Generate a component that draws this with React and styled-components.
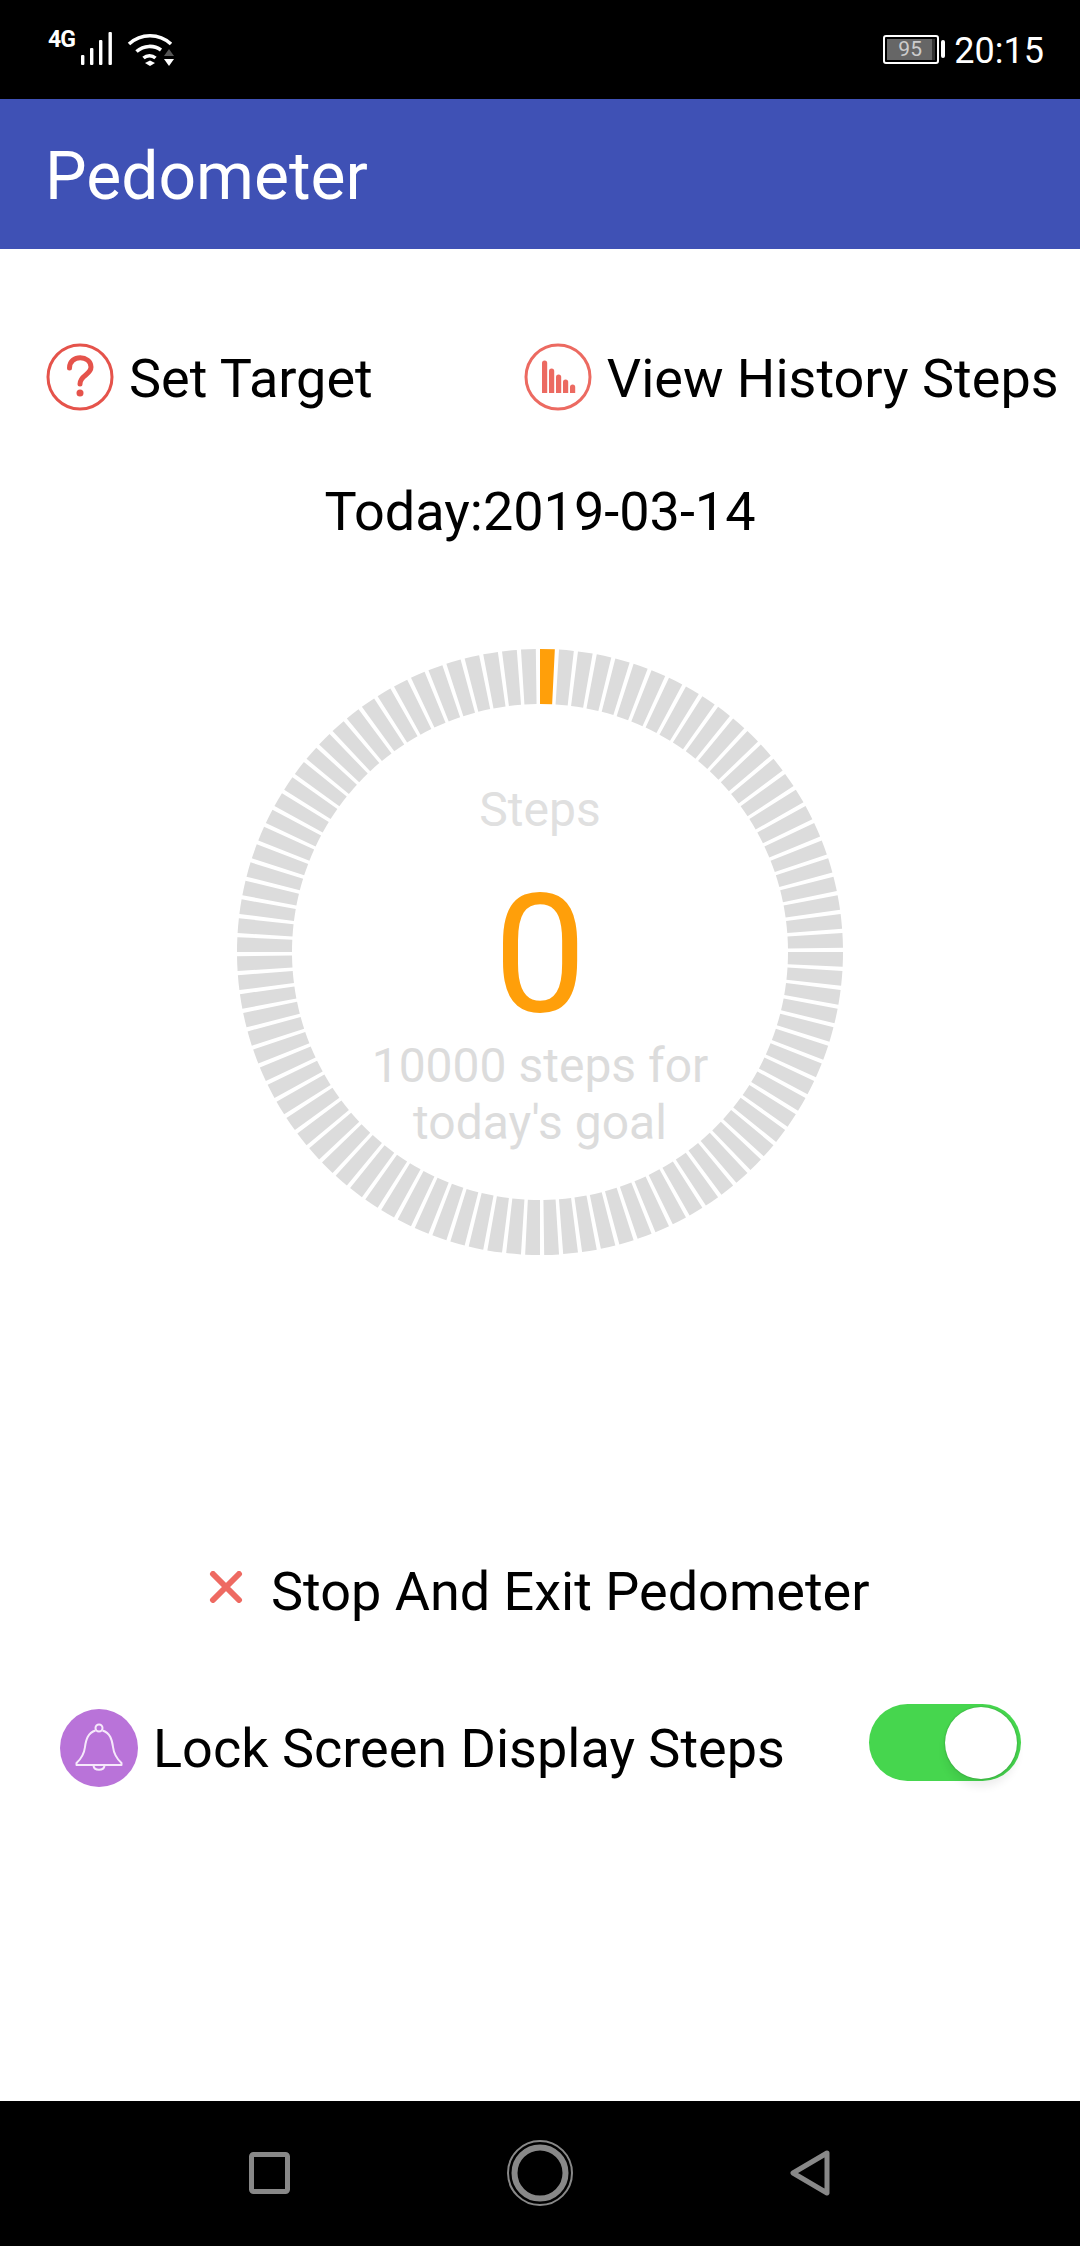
import React from "react";
import styled, { createGlobalStyle } from "styled-components";

const GlobalStyle = createGlobalStyle`
  html, body { margin: 0; padding: 0; background: #fff; }
  body { font-family: Roboto, "Liberation Sans", sans-serif; }
`;

const Screen = styled.div`
  width: 1080px;
  height: 2246px;
  display: flex;
  flex-direction: column;
  background: #fff;
  overflow: hidden;
`;

const StatusBar = styled.div`
  height: 99px;
  flex: none;
  background: #000;
  color: #fff;
  display: flex;
  align-items: flex-start;
  padding: 0 36px 0 48px;
  box-sizing: border-box;
`;

const NetworkLabel = styled.span`
  font-size: 23px;
  line-height: 20px;
  font-weight: 700;
  letter-spacing: -1px;
  margin-top: 30px;
  width: 33px;
`;

const SignalIcon = styled.svg`
  margin-top: 32px;
  width: 32px;
  height: 33px;
`;

const WifiIcon = styled.svg`
  margin: 32px 0 0 14px;
  width: 48px;
  height: 34px;
`;

const StatusRight = styled.div`
  margin-left: auto;
  display: flex;
  align-items: center;
  margin-top: 33px;
  height: 32px;
`;

const Battery = styled.div`
  width: 56px;
  height: 29px;
  box-sizing: border-box;
  border: 2px solid #fff;
  border-radius: 3px;
  padding: 2px;
  display: flex;
`;

const BatteryFill = styled.div`
  flex: 1;
  background: #666;
  color: #ccc;
  font-size: 21px;
  line-height: 21px;
  padding-left: 11px;
  border-right: 3px solid #333;
`;

const BatteryTip = styled.div`
  width: 4px;
  height: 18px;
  margin-left: 2px;
  background: #fff;
  border-radius: 2px;
`;

const Clock = styled.span`
  font-size: 36px;
  line-height: 32px;
  margin: 4px 0 0 9px;
`;

const Header = styled.header`
  height: 150px;
  flex: none;
  background: #3f51b5;
  color: #fff;
  display: flex;
  align-items: center;
  padding: 4px 0 0 45px;
  box-sizing: border-box;
  font-size: 66px;
`;

const Content = styled.main`
  flex: 1;
  display: flex;
  flex-direction: column;
  padding-top: 94px;
  color: #000;
`;

const ActionsRow = styled.div`
  display: flex;
  height: 67px;
  align-items: center;
  padding-left: 46px;
`;

const Action = styled.div`
  display: flex;
  align-items: center;
  gap: 15px;
  font-size: 54px;
  margin-left: ${(p) => p.$offset || 0}px;
`;

const ActionLabel = styled.span`
  padding-top: 3px;
`;

const RoundIcon = styled.svg`
  width: 68px;
  height: 68px;
  flex: none;
`;

const DateLine = styled.div`
  text-align: center;
  font-size: 54px;
  line-height: 64px;
  margin-top: 70px;
`;

const Gauge = styled.div`
  display: grid;
  width: 608px;
  height: 608px;
  margin: 104px auto 0;
  & > * { grid-area: 1 / 1; }
`;

const GaugeText = styled.div`
  display: flex;
  flex-direction: column;
  align-items: center;
  padding-top: 134px;
  box-sizing: border-box;
`;

const StepsLabel = styled.div`
  font-size: 48px;
  line-height: 56px;
  color: #e0e0e0;
`;

const StepsCount = styled.div`
  font-size: 165px;
  line-height: 165px;
  color: #ff9f0a;
  margin-top: 34px;
`;

const GoalText = styled.div`
  width: 380px;
  font-size: 48px;
  line-height: 57px;
  text-align: center;
  color: #dcdcdc;
`;

const StopRow = styled.div`
  display: flex;
  align-items: center;
  margin-top: 304px;
  padding-left: 208px;
  gap: 27px;
  font-size: 54px;
  line-height: 64px;
`;

const StopIcon = styled.svg`
  width: 36px;
  height: 32px;
  margin-bottom: 10px;
`;

const LockRow = styled.div`
  display: flex;
  align-items: center;
  margin-top: 85px;
  padding: 0 59px 0 60px;
  font-size: 54px;
`;

const BellBadge = styled.div`
  width: 78px;
  height: 78px;
  border-radius: 50%;
  background: #b973d9;
  display: flex;
  align-items: center;
  justify-content: center;
  margin-right: 15px;
`;

const Toggle = styled.div`
  margin-left: auto;
  width: 152px;
  height: 77px;
  border-radius: 39px;
  background: #46d64e;
  position: relative;
  margin-top: -12px;
`;

const Knob = styled.div`
  position: absolute;
  top: 3px;
  right: 4px;
  width: 72px;
  height: 72px;
  border-radius: 50%;
  background: #fff;
  box-shadow: 0 0 2px rgba(0, 0, 0, 0.3), 0 8px 8px rgba(0, 0, 0, 0.07);
`;

const NavBar = styled.nav`
  height: 145px;
  flex: none;
  background: #000;
  display: flex;
  align-items: center;
  padding: 0 250px 2px 249px;
  justify-content: space-between;
  box-sizing: border-box;
`;

const NavIcon = styled.svg`
  display: block;
  flex: none;
`;

const SEGMENTS = 100;
const CX = 304;
const CY = 304;
const OUTER = 303;
const INNER = 248;

function segmentPath(i) {
  const step = (2 * Math.PI) / SEGMENTS;
  const a0 = i * step - Math.PI / 2;
  const a1 = a0 + step * 0.78;
  const pt = (r, a) => `${(CX + r * Math.cos(a)).toFixed(2)} ${(CY + r * Math.sin(a)).toFixed(2)}`;
  return `M${pt(INNER, a0)} L${pt(OUTER, a0)} A${OUTER} ${OUTER} 0 0 1 ${pt(OUTER, a1)} L${pt(INNER, a1)} A${INNER} ${INNER} 0 0 0 ${pt(INNER, a0)}Z`;
}

function Ring({ current }) {
  return (
    <svg width="608" height="608" viewBox="0 0 608 608">
      {Array.from({ length: SEGMENTS }, (_, i) => (
        <path key={i} d={segmentPath(i)} fill={i === current ? "#ff9f0a" : "#dcdcdc"} />
      ))}
    </svg>
  );
}

export default function App() {
  return (
    <Screen>
      <GlobalStyle />
      <StatusBar>
        <NetworkLabel>4G</NetworkLabel>
        <SignalIcon viewBox="0 0 32 33">
          <g fill="#fff">
            <rect x="0" y="23" width="3.4" height="10" rx="1" />
            <rect x="9" y="16" width="3.4" height="17" rx="1" />
            <rect x="18" y="8" width="3.4" height="25" rx="1" />
            <rect x="27.5" y="0" width="3.4" height="33" rx="1" />
          </g>
        </SignalIcon>
        <WifiIcon viewBox="0 0 48 34">
          <g fill="none" stroke="#fff" strokeWidth="3.6">
            <path d="M2 12 C14 1 32 1 44 12" />
            <path d="M9.5 19.5 C17 13 27 13 34 18" />
            <path d="M16.5 26 C20 23 25 23 28.5 26" />
          </g>
          <path d="M18 31 L23 28.5 L28 31 L23 34Z" fill="#fff" />
          <path d="M37 24 L42 17 L47 24Z" fill="#555" />
          <path d="M37 27 L47 27 L42 34Z" fill="#fff" />
        </WifiIcon>
        <StatusRight>
          <Battery>
            <BatteryFill>95</BatteryFill>
          </Battery>
          <BatteryTip />
          <Clock>20:15</Clock>
        </StatusRight>
      </StatusBar>
      <Header>Pedometer</Header>
      <Content>
        <ActionsRow>
          <Action>
            <RoundIcon viewBox="0 0 68 68">
              <circle cx="34" cy="34" r="32" fill="none" stroke="#e5534b" strokeWidth="3" />
              <path d="M23.5 25 C23.5 11 45 12 45 24 C45 32 34 32 34 41" fill="none" stroke="#e5534b" strokeWidth="5" strokeLinecap="round" />
              <circle cx="34" cy="50" r="3.5" fill="#e5534b" />
            </RoundIcon>
            <ActionLabel>Set Target</ActionLabel>
          </Action>
          <Action $offset={151}>
            <RoundIcon viewBox="0 0 68 68">
              <circle cx="34" cy="34" r="32" fill="none" stroke="#ec6a61" strokeWidth="3" />
              <g fill="#ec6a61">
                <path d="M18 50 V20 a2.6 2.6 0 0 1 5.2 0 V50Z" />
                <path d="M25 50 V28 a2.6 2.6 0 0 1 5.2 0 V50Z" />
                <path d="M32 50 V34 a2.6 2.6 0 0 1 5.2 0 V50Z" />
                <path d="M39 50 V39 a2.6 2.6 0 0 1 5.2 0 V50Z" />
                <path d="M46 50 V44 a2.6 2.6 0 0 1 5.2 0 V50Z" />
              </g>
            </RoundIcon>
            <ActionLabel>View History Steps</ActionLabel>
          </Action>
        </ActionsRow>
        <DateLine>Today:2019-03-14</DateLine>
        <Gauge>
          <Ring current={0} />
          <GaugeText>
            <StepsLabel>Steps</StepsLabel>
            <StepsCount>0</StepsCount>
            <GoalText>10000 steps for today's goal</GoalText>
          </GaugeText>
        </Gauge>
        <StopRow>
          <StopIcon viewBox="0 0 36 32">
            <path d="M5 3 L31 29 M31 3 L5 29" stroke="#ee6a62" strokeWidth="6" strokeLinecap="round" />
          </StopIcon>
          Stop And Exit Pedometer
        </StopRow>
        <LockRow>
          <BellBadge>
            <svg width="48" height="50" viewBox="0 0 48 50">
              <g fill="none" stroke="#f6e9fb" strokeWidth="2" strokeLinejoin="round">
                <circle cx="24" cy="5" r="3.5" />
                <path d="M20.5 7.5 C13 10 11 16 10 24 C9 32 6 36 1.5 40 L1.5 42 L46.5 42 L46.5 40 C42 36 39 32 38 24 C37 16 35 10 27.5 7.5" />
                <path d="M18.5 43 C19.5 48 28.5 48 29.5 43" />
              </g>
            </svg>
          </BellBadge>
          Lock Screen Display Steps
          <Toggle>
            <Knob />
          </Toggle>
        </LockRow>
      </Content>
      <NavBar>
        <NavIcon width="41" height="42" viewBox="0 0 41 42">
          <rect x="2.5" y="2.5" width="36" height="37" rx="2" fill="none" stroke="#888" strokeWidth="5" />
        </NavIcon>
        <NavIcon width="66" height="66" viewBox="0 0 66 66">
          <circle cx="33" cy="33" r="32" fill="none" stroke="#888" strokeWidth="2" />
          <circle cx="33" cy="33" r="25.5" fill="none" stroke="#888" strokeWidth="6" />
        </NavIcon>
        <NavIcon width="40" height="46" viewBox="0 0 40 46">
          <path d="M37 3 L3 23 L37 43Z" fill="none" stroke="#888" strokeWidth="5" strokeLinejoin="round" />
        </NavIcon>
      </NavBar>
    </Screen>
  );
}
